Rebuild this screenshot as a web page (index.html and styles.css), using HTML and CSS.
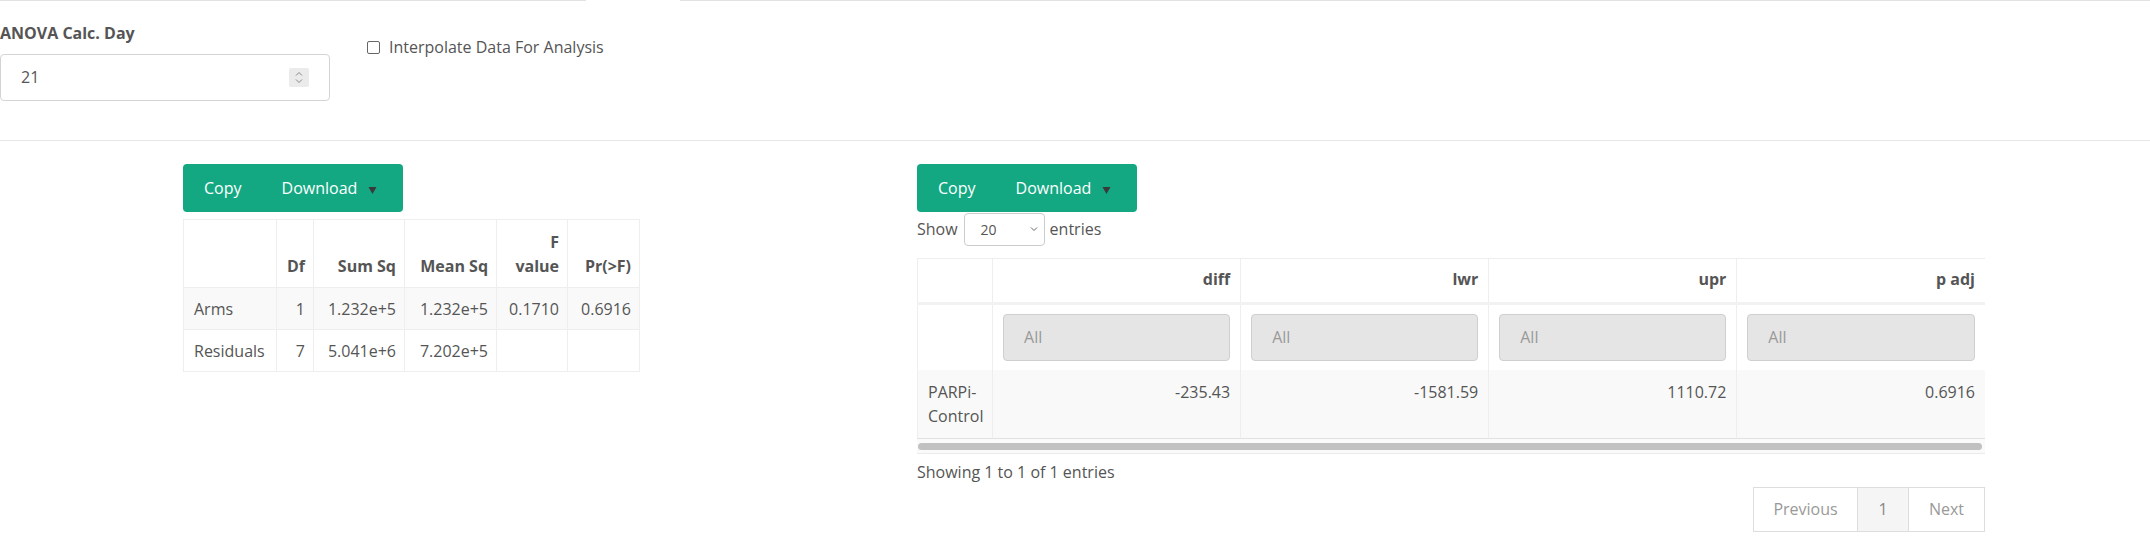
FILE: index.html
```html
<!DOCTYPE html>
<html>
<head>
<meta charset="utf-8">
<link rel="stylesheet" href="styles.css">
</head>
<body>
<div class="topline"><div class="seg seg-a"></div><div class="seg-gap"></div><div class="seg seg-b"></div></div>
<div class="controls">
  <div class="field">
    <label class="field-label">ANOVA Calc. Day</label>
    <div class="num-input">
      <span class="num-value">21</span>
      <span class="spinner">
        <svg width="20" height="19" viewBox="0 0 20 19"><path d="M7 7.5 L10 4.5 L13 7.5" fill="none" stroke="#888" stroke-width="1"/><path d="M7 11.5 L10 14.5 L13 11.5" fill="none" stroke="#888" stroke-width="1"/></svg>
      </span>
    </div>
  </div>
  <div class="check">
    <span class="checkbox"></span>
    <span class="check-label">Interpolate Data For Analysis</span>
  </div>
</div>
<div class="divider"></div>
<div class="content">
  <div class="left-col">
    <div class="btn-group">
      <span class="btn btn-copy">Copy</span>
      <span class="btn btn-dl">Download <svg class="caret" width="9" height="8" viewBox="0 0 9 8"><path d="M0.5 1 L8.5 1 L4.5 8 Z" fill="#3a3a3a"/></svg></span>
    </div>
    <table class="anova">
      <colgroup><col class="c1"><col class="c2"><col class="c3"><col class="c4"><col class="c5"><col class="c6"></colgroup>
      <thead>
        <tr><th></th><th>Df</th><th>Sum Sq</th><th>Mean Sq</th><th>F value</th><th>Pr(&gt;F)</th></tr>
      </thead>
      <tbody>
        <tr class="odd"><td class="lbl">Arms</td><td>1</td><td>1.232e+5</td><td>1.232e+5</td><td>0.1710</td><td>0.6916</td></tr>
        <tr><td class="lbl">Residuals</td><td>7</td><td>5.041e+6</td><td>7.202e+5</td><td></td><td></td></tr>
      </tbody>
    </table>
  </div>
  <div class="right-col">
    <div class="btn-group">
      <span class="btn btn-copy">Copy</span>
      <span class="btn btn-dl">Download <svg class="caret" width="9" height="8" viewBox="0 0 9 8"><path d="M0.5 1 L8.5 1 L4.5 8 Z" fill="#3a3a3a"/></svg></span>
    </div>
    <div class="length">
      <span>Show</span>
      <span class="select"><span class="sel-val">20</span><svg width="8" height="6" viewBox="0 0 8 6"><path d="M1 1.5 L4 4.5 L7 1.5" fill="none" stroke="#666" stroke-width="1"/></svg></span>
      <span>entries</span>
    </div>
    <table class="tukey">
      <colgroup><col class="t1"><col class="t2"><col class="t2"><col class="t2"><col class="t2"></colgroup>
      <thead>
        <tr class="hdr"><th></th><th>diff</th><th>lwr</th><th>upr</th><th>p adj</th></tr>
        <tr class="filters"><td></td><td><div class="filter">All</div></td><td><div class="filter">All</div></td><td><div class="filter">All</div></td><td><div class="filter">All</div></td></tr>
      </thead>
      <tbody>
        <tr class="odd"><td class="lbl">PARPi-<br>Control</td><td>-235.43</td><td>-1581.59</td><td>1110.72</td><td>0.6916</td></tr>
      </tbody>
    </table>
    <div class="scrollbar"><div class="thumb"></div></div>
    <div class="info">Showing 1 to 1 of 1 entries</div>
    <div class="pager">
      <span class="pg pg-prev">Previous</span>
      <span class="pg pg-cur">1</span>
      <span class="pg pg-next">Next</span>
    </div>
  </div>
</div>
</body>
</html>
```

FILE: styles.css
```css
* { box-sizing: border-box; }
body {
  margin: 0;
  font-family: "Open Sans", Lato, sans-serif;
  font-size: 16px;
  color: #555;
  background: #fff;
  line-height: 1.42857;
}
.topline { display: flex; height: 1px; }
.seg { background: #e2e2e2; }
.seg-a { width: 586px; }
.seg-gap { width: 94px; }
.seg-b { flex: 1; }

.controls {
  display: flex;
  height: 139px;
  padding-top: 22px;
}
.field { width: 330px; }
.field-label {
  display: block;
  font-weight: 700;
  font-size: 16px;
  line-height: 20px;
  color: #555;
  margin-bottom: 11px;
}
.num-input {
  height: 47px;
  border: 1px solid #d4d4d4;
  border-radius: 4px;
  display: flex;
  align-items: center;
  justify-content: space-between;
  padding: 0 20px 0 20px;
}
.num-value { font-size: 16px; color: #555; }
.spinner {
  display: flex;
  width: 20px;
  height: 19px;
  background: #ebebeb;
  border-radius: 2px;
}
.check {
  margin-left: 37px;
  padding-top: 14px;
  display: flex;
  align-items: center;
  height: 34px;
}
.checkbox {
  width: 13px;
  height: 13px;
  border: 1px solid #666;
  border-radius: 2px;
  margin-right: 9px;
}
.check-label { font-size: 16px; line-height: 20px; color: #555; }

.divider { border-top: 1px solid #e6e6e6; }

.content { display: flex; padding-top: 23px; }
.left-col { margin-left: 183px; width: 734px; }
.right-col { width: 1068px; }

.btn-group {
  display: inline-flex;
  align-items: center;
  height: 48px;
  width: 220px;
  background: #13a882;
  border-radius: 4px;
}
.btn {
  color: #fff;
  font-size: 16px;
  padding: 0 20px;
  display: inline-flex;
  align-items: center;
}
.btn-copy { padding-left: 21px; }
.caret { margin-left: 11px; margin-top: 3px; }

.anova {
  margin-top: 7px;
  border-collapse: collapse;
  table-layout: fixed;
  width: 456px;
}
.anova .c1 { width: 93px; }
.anova .c2 { width: 37px; }
.anova .c3 { width: 91px; }
.anova .c4 { width: 92px; }
.anova .c5 { width: 71px; }
.anova .c6 { width: 72px; }
.anova th, .anova td {
  border: 1px solid #eeeeee;
  padding: 10px 8px 10px 8px;
  text-align: right;
  vertical-align: bottom;
  white-space: nowrap;
}
.anova th { font-weight: 700; color: #555; white-space: normal; line-height: 24px; padding-bottom: 9px; }
.anova td { vertical-align: top; height: 42px; padding-top: 10px; padding-bottom: 9px; line-height: 22px; }
.anova td.lbl { text-align: left; padding-left: 10px; padding-right: 4px; }
.anova tr.odd td { background: #f9f9f9; }

.length {
  display: flex;
  align-items: center;
  height: 34px;
  font-size: 16px;
  color: #555;
}
.select {
  margin: 0 5px 0 6px;
  width: 81px;
  height: 33px;
  border: 1px solid #ccc;
  border-radius: 4px;
  display: flex;
  align-items: center;
  justify-content: space-between;
  padding: 0 6px 0 16px;
  font-size: 14px;
}
.sel-val { margin-top: 2px; }

.tukey {
  margin-top: 12px;
  border-collapse: collapse;
  table-layout: fixed;
  width: 1068px;
}
.tukey .t1 { width: 75px; }
.tukey .t2 { width: 248px; }
.tukey th, .tukey td {
  border-left: 1px solid #eeeeee;
  padding: 9px 10px;
  text-align: right;
  vertical-align: top;
}
.tukey tr.hdr th {
  border-top: 1px solid #eeeeee;
  border-bottom: 3px solid #f2f2f2;
  font-weight: 700;
  color: #555;
  height: 45px;
}
.tukey tr.filters td { padding: 9px 10px; height: 65px; vertical-align: middle; }
.filter {
  height: 47px;
  background: #e5e5e5;
  border: 1px solid #cfcfcf;
  border-radius: 4px;
  text-align: left;
  padding-left: 20px;
  line-height: 45px;
  color: #999;
  font-size: 16px;
}
.tukey tbody td {
  padding: 10px 10px;
  height: 68px;
  line-height: 24px;
  border-bottom: 1px solid #e2e2e2;
}
.tukey tbody td.lbl { text-align: left; padding-left: 10px; }
.tukey tr.odd td { background: #f9f9f9; }

.scrollbar {
  height: 15px;
  padding: 4px 3px 0 1px;
  border-bottom: 1px solid #ebebeb;
  background: #fafafa;
}
.thumb { height: 7px; background: #c1c1c1; border-radius: 4px; }

.info { margin-top: 6px; line-height: 24px; color: #555; }

.pager {
  display: flex;
  justify-content: flex-end;
  margin-top: 3px;
}
.pg {
  height: 45px;
  border: 1px solid #dddddd;
  display: flex;
  align-items: center;
  justify-content: center;
  color: #999;
  font-size: 16px;
  margin-left: -1px;
}
.pg-prev { width: 105px; }
.pg-cur { width: 52px; background: #f5f5f5; color: #888; }
.pg-next { width: 77px; }
```
